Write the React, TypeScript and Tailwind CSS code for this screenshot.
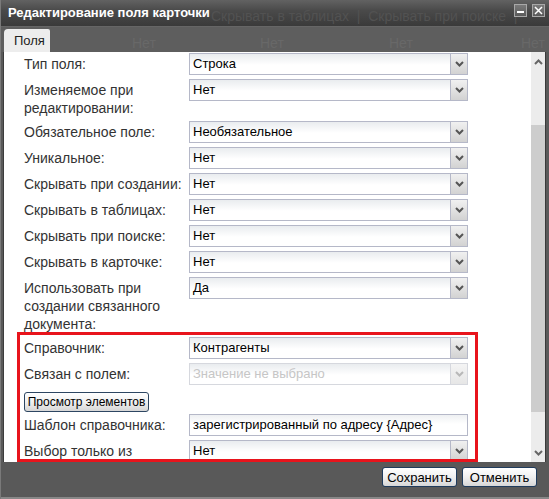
import React from "react";

const Chevron = ({ up = false, color = "#555" }: { up?: boolean; color?: string }) => (
  <svg width="9" height="6" viewBox="0 0 9 6" className={up ? "rotate-180" : ""}>
    <path d="M1 1 L4.5 4.5 L8 1" stroke={color} strokeWidth="2" fill="none" />
  </svg>
);

const Select = ({ value, disabled = false }: { value: string; disabled?: boolean }) => (
  <div
    className={`flex h-[22px] w-[279px] shrink-0 border bg-[linear-gradient(#e9ecef,#ffffff_55%)] ${
      disabled ? "border-[#d6d8de]" : "border-[#b5b8c8]"
    }`}
  >
    <div className={`flex-1 flex items-center pl-[3px] text-[13px] ${disabled ? "text-[#c6c6c6]" : "text-black"}`}>
      {value}
    </div>
    <div
      className={`w-[17px] flex items-center justify-center border-l ${
        disabled
          ? "border-[#d6d8de] bg-[linear-gradient(#f4f4f4,#e6e6e6)]"
          : "border-[#b5b8c8] bg-[linear-gradient(#f0f0f0,#d2d2d2)]"
      }`}
    >
      <Chevron color={disabled ? "#b8b8b8" : "#555"} />
    </div>
  </div>
);

const Row = ({ label, children }: { label: React.ReactNode; children: React.ReactNode }) => (
  <div className="flex items-start mb-[4px]">
    <div className="w-[165px] shrink-0 pt-[2px] leading-[18px] text-[14px] text-[#333]">{label}</div>
    {children}
  </div>
);

const rows: { label: React.ReactNode; value: string }[] = [
  { label: "Тип поля:", value: "Строка" },
  { label: <>Изменяемое при<br />редактировании:</>, value: "Нет" },
  { label: "Обязательное поле:", value: "Необязательное" },
  { label: "Уникальное:", value: "Нет" },
  { label: "Скрывать при создании:", value: "Нет" },
  { label: "Скрывать в таблицах:", value: "Нет" },
  { label: "Скрывать при поиске:", value: "Нет" },
  { label: "Скрывать в карточке:", value: "Нет" },
  { label: <>Использовать при<br />создании связанного<br />документа:</>, value: "Да" },
];

export default function App() {
  return (
    <div className="w-[549px] h-[499px] bg-[#595959] flex flex-col overflow-hidden font-['Liberation_Sans',Arial,sans-serif] border-l border-[#7a7a7a]">
      {/* title bar */}
      <div className="relative h-[26px] shrink-0 flex items-center bg-[linear-gradient(#626262,#4a4a4a_40%,#3a3a3a)]">
        <span className="pl-[7px] text-[13px] font-bold text-white">Редактирование поля карточки</span>
        <span className="absolute left-[210px] top-[6px] text-[14px] text-[#525252] whitespace-nowrap">
          Скрывать в таблицах&nbsp;&nbsp;|&nbsp;&nbsp;Скрывать при поиске&nbsp;&nbsp;|
        </span>
        <div className="absolute right-[4px] top-[4px] flex gap-[5px]">
          <div className="w-[13px] h-[13px] border border-[#a8a8a8] bg-[linear-gradient(#7a7a7a,#5a5a5a)] flex items-center justify-center">
            <div className="w-[7px] h-[2px] bg-white mt-[3px]" />
          </div>
          <div className="w-[13px] h-[13px] border border-[#a8a8a8] bg-[linear-gradient(#7a7a7a,#5a5a5a)] flex items-center justify-center">
            <svg width="9" height="9" viewBox="0 0 9 9">
              <path d="M1 1 L8 8 M8 1 L1 8" stroke="#fff" strokeWidth="1.5" />
            </svg>
          </div>
        </div>
      </div>

      {/* tab strip */}
      <div className="relative h-[26px] shrink-0 flex items-end pl-[3px] bg-[#5e5e5e] border-t border-[#666]">
        <div className="w-[46px] h-[23px] rounded-tl-[4px] rounded-tr-[2px] bg-[#ededed] flex items-center pl-[10px] text-[13px] text-[#222]">
          Поля
        </div>
        <span className="absolute left-[131px] top-[6px] text-[14px] text-[#686868]">Нет</span>
        <span className="absolute left-[259px] top-[6px] text-[14px] text-[#686868]">Нет</span>
        <span className="absolute left-[388px] top-[6px] text-[14px] text-[#686868]">Нет</span>
        <span className="absolute left-[520px] top-[6px] text-[14px] text-[#686868]">Нет</span>
      </div>

      {/* body */}
      <div className="flex h-[410px] shrink-0">
        <div className="w-[3px] border-r border-[#3c3c3c]" />
        <div className="w-[527px] bg-white overflow-hidden pl-[20px] pt-[1px]">
          {rows.map((r, i) => (
            <Row key={i} label={r.label}>
              <Select value={r.value} />
            </Row>
          ))}

          <div className="relative">
            <div className="absolute left-[-7px] top-[-5px] w-[461px] h-[130px] border-[3px] border-[#e8141c]" />
            <Row label="Справочник:">
              <Select value="Контрагенты" />
            </Row>
            <Row label="Связан с полем:">
              <Select value="Значение не выбрано" disabled />
            </Row>
            <div className="mb-[1px]">
              <button className="w-[125px] h-[20px] rounded-[3px] border border-[#2d4662] bg-[linear-gradient(#ffffff,#f0f0f0_50%,#d6d6d6)] text-[12px] text-black">
                Просмотр элементов
              </button>
            </div>
            <Row label="Шаблон справочника:">
              <div className="h-[22px] w-[279px] border border-[#b5b8c8] bg-[linear-gradient(#eef0f2,#ffffff_45%)] flex items-center pl-[3px] text-[13px] text-black">
                зарегистрированный по адресу {"{Адрес}"}
              </div>
            </Row>
            <Row label="Выбор только из">
              <Select value="Нет" />
            </Row>
          </div>
        </div>

        {/* scrollbar */}
        <div className="w-[14px] bg-[#ececec] flex flex-col">
          <div className="h-[20px] flex items-center justify-center">
            <Chevron up color="#666" />
          </div>
          <div className="mt-[53px] h-[287px] bg-[#cdcdcd]" />
          <div className="flex-1" />
          <div className="h-[18px] flex items-center justify-center">
            <Chevron color="#666" />
          </div>
        </div>
        <div className="w-[4px] border-l border-[#3a3a3a] bg-[#5a5a5a]" />
      </div>

      {/* footer */}
      <div className="flex-1 flex justify-end items-start gap-[5px] pr-[12px] pt-[5px] border-b-2 border-[#888]">
        <button className="w-[75px] h-[20px] rounded-[3px] border border-[#1f3b5c] bg-[linear-gradient(#ffffff,#f0f0f0_50%,#d6d6d6)] text-[13px] text-black">
          Сохранить
        </button>
        <button className="w-[75px] h-[20px] rounded-[3px] border border-[#1f3b5c] bg-[linear-gradient(#ffffff,#f0f0f0_50%,#d6d6d6)] text-[13px] text-black">
          Отменить
        </button>
      </div>
    </div>
  );
}
